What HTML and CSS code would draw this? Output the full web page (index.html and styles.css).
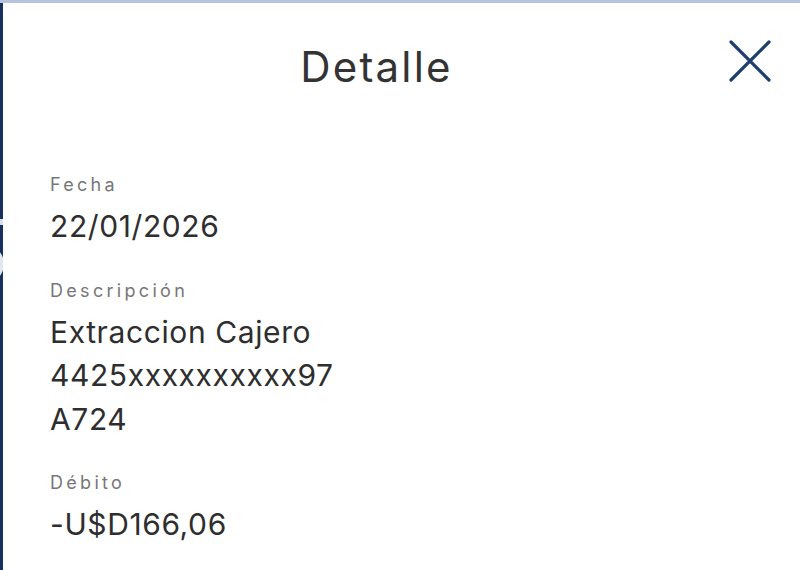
FILE: index.html
```html
<!DOCTYPE html>
<html lang="es">
<head>
<meta charset="utf-8">
<title>Detalle</title>
<link rel="stylesheet" href="styles.css">
</head>
<body>
  <div class="topbar"></div>
  <div class="screen">
    <div class="backdrop">
      <span class="backdrop-bar"></span>
      <span class="backdrop-circle"></span>
    </div>
    <main class="sheet">
      <header class="sheet-header">
        <h1 class="sheet-title">Detalle</h1>
        <button class="close-btn" aria-label="Cerrar">
          <svg viewBox="0 0 42 42" width="42" height="42">
            <path d="M2 2 L40 40 M40 2 L2 40" stroke="#1f3f72" stroke-width="3.2" stroke-linecap="round" fill="none"/>
          </svg>
        </button>
      </header>
      <section class="fields">
        <div class="field">
          <div class="field-label">Fecha</div>
          <div class="field-value">22/01/2026</div>
        </div>
        <div class="field">
          <div class="field-label">Descripción</div>
          <div class="field-value">Extraccion Cajero<br>4425xxxxxxxxxx97<br>A724</div>
        </div>
        <div class="field">
          <div class="field-label">Débito</div>
          <div class="field-value">-U$D166,06</div>
        </div>
      </section>
    </main>
  </div>
</body>
</html>
```

FILE: styles.css
```css
* { box-sizing: border-box; }
html, body {
  margin: 0;
  padding: 0;
  width: 800px;
  height: 570px;
  overflow: hidden;
  background: #ffffff;
  font-family: "Inter", "Noto Sans", sans-serif;
}
.topbar {
  height: 3px;
  background: #b8c3dc;
}
.screen {
  display: flex;
  height: 567px;
}
.backdrop {
  position: relative;
  width: 3px;
  background: #17315e;
  overflow: hidden;
  flex: none;
}
.backdrop-bar {
  position: absolute;
  left: 0;
  top: 216px;
  width: 3px;
  height: 6px;
  background: #d9dde6;
}
.backdrop-circle {
  position: absolute;
  left: -34px;
  top: 242px;
  width: 38px;
  height: 38px;
  border-radius: 50%;
  background: #e3e6ec;
}
.sheet {
  flex: 1;
  background: #ffffff;
  display: flex;
  flex-direction: column;
}
.sheet-header {
  display: flex;
  align-items: flex-start;
  padding: 37px 29px 0 21px;
}
.sheet-title {
  flex: 1;
  margin: 0;
  padding-top: 2px;
  text-align: center;
  font-size: 42px;
  line-height: 50px;
  letter-spacing: 2.2px;
  font-weight: 400;
  color: #333333;
}
.close-btn {
  border: 0;
  padding: 0;
  background: none;
  width: 42px;
  height: 42px;
  display: block;
  flex: none;
}
.close-btn svg { display: block; }
.fields {
  display: flex;
  flex-direction: column;
  gap: 30px;
  padding: 81px 20px 0 47px;
}
.field-label {
  font-size: 18px;
  line-height: 24px;
  letter-spacing: 3.3px;
  color: #777777;
}
.field-value {
  margin-top: 8px;
  font-size: 30px;
  line-height: 43.5px;
  letter-spacing: 0.6px;
  color: #2e2e2e;
}
```
